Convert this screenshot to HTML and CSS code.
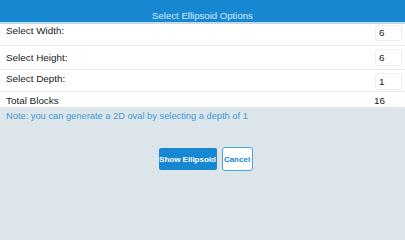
FILE: index.html
```html
<!DOCTYPE html>
<html>
<head>
<meta charset="utf-8">
<link rel="stylesheet" href="styles.css">
</head>
<body>
<div class="app">
  <header class="header">
    <div class="title">Select Ellipsoid Options</div>
  </header>
  <div class="strip"></div>
  <div class="list">
    <div class="row row--first">
      <span class="label">Select Width:</span>
      <span class="input">6</span>
    </div>
    <div class="row row--second">
      <span class="label">Select Height:</span>
      <span class="input">6</span>
    </div>
    <div class="row">
      <span class="label">Select Depth:</span>
      <span class="input">1</span>
    </div>
    <div class="row row--total">
      <span class="label">Total Blocks</span>
      <span class="total">16</span>
    </div>
  </div>
  <div class="footer">
    <p class="note">Note: you can generate a 2D oval by selecting a depth of 1</p>
    <div class="actions">
      <button class="btn btn--primary">Show Ellipsoid</button>
      <button class="btn btn--secondary">Cancel</button>
    </div>
  </div>
</div>
</body>
</html>
```
FILE: styles.css
```css
html, body {
  margin: 0;
  padding: 0;
}
body {
  width: 405px;
  height: 228px;
  overflow: hidden;
  font-family: "Liberation Sans", Arial, sans-serif;
  background: #dce6ea;
}
.app {
  display: flex;
  flex-direction: column;
  height: 228px;
}
.header {
  background: #1787d1;
  height: 22px;
  box-sizing: border-box;
  padding-top: 10px;
}
.title {
  text-align: center;
  color: #d6ecf8;
  font-size: 9.6px;
  line-height: 12px;
}
.strip {
  height: 2px;
  background: #c3dbea;
}
.list {
  background: #ffffff;
}
.row {
  display: flex;
  justify-content: space-between;
  align-items: flex-start;
  height: 22px;
  box-sizing: border-box;
  padding: 3px 3px 0 6px;
  border-bottom: 1px solid #e8ecee;
}
.row--first {
  height: 22px;
  padding-top: 1px;
}
.row--second {
  height: 24px;
}
.row--second .label {
  margin-top: 3px;
}
.row--total {
  height: 15px;
  border-bottom: none;
}
.label {
  font-size: 9.9px;
  line-height: 12px;
  color: #1a1a1a;
}
.input {
  width: 27px;
  height: 17px;
  box-sizing: border-box;
  border: 1px solid #eceeef;
  border-radius: 3px;
  background: #fff;
  font-size: 9.9px;
  line-height: 15px;
  padding-left: 3px;
  color: #1a1a1a;
}
.row--first .input {
  height: 16px;
  line-height: 14px;
}
.total {
  font-size: 9.9px;
  line-height: 12px;
  color: #1a1a1a;
  width: 28px;
  margin-right: 0;
}
.footer {
  flex: 1;
  background: #dce6ea;
  padding-top: 3px;
}
.note {
  margin: 0;
  padding-left: 6px;
  font-size: 9.3px;
  line-height: 12px;
  color: #3c9ad7;
}
.actions {
  display: flex;
  justify-content: center;
  align-items: center;
  gap: 5px;
  margin-top: 25px;
  padding-left: 6px;
}
.btn {
  font-family: "Liberation Sans", Arial, sans-serif;
  font-weight: bold;
  font-size: 8px;
  border-radius: 2px;
  padding: 0;
  cursor: pointer;
}
.btn--primary {
  width: 58px;
  height: 22px;
  background: #1787d1;
  color: #ffffff;
  border: none;
}
.btn--secondary {
  width: 31px;
  height: 24px;
  background: #ffffff;
  color: #1787d1;
  border: 1px solid #4ba3dc;
  border-radius: 3px;
}
```
